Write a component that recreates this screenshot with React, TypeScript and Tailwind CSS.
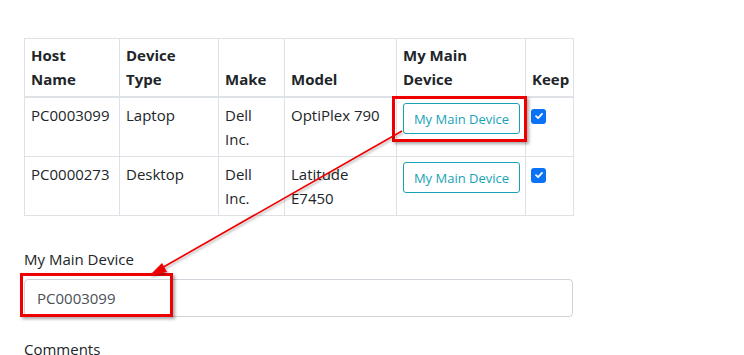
import React from "react";

const font = { fontFamily: '"Open Sans", "Noto Sans", sans-serif' };

function Check() {
  return (
    <span className="-ml-[1px] mt-[4px] inline-flex h-[15px] w-[15px] items-center justify-center rounded-[3px] bg-[#0a72f5]">
      <svg width="10" height="10" viewBox="0 0 10 10">
        <path d="M2 5.2 L4.1 7.2 L8 2.8" fill="none" stroke="white" strokeWidth="1.8" strokeLinecap="round" strokeLinejoin="round" />
      </svg>
    </span>
  );
}

function MainBtn() {
  return (
    <button className="h-[31px] w-[117px] rounded-[3px] border border-[#17a2b8] bg-white text-[13px] text-[#17a2b8]">
      My Main Device
    </button>
  );
}

export default function App() {
  const th = "border border-[#dee2e6] border-b-2 px-[6px] pt-[4px] pb-[5px] text-left align-bottom font-bold";
  const td = "border border-[#dee2e6] px-[6px] py-[5px] align-top";
  return (
    <div className="relative h-[355px] w-[744px] overflow-hidden bg-white text-[15px] leading-[24px] text-[#212529]" style={font}>
      <div className="w-[573px] pl-[24px] pt-[38px]">
        <table className="w-[549px] table-fixed border-collapse">
          <colgroup>
            <col className="w-[95px]" />
            <col className="w-[99px]" />
            <col className="w-[66px]" />
            <col className="w-[112px]" />
            <col className="w-[129px]" />
            <col className="w-[48px]" />
          </colgroup>
          <thead>
            <tr>
              <th className={th}>Host Name</th>
              <th className={th}>Device Type</th>
              <th className={th}>Make</th>
              <th className={th}>Model</th>
              <th className={th}>My Main Device</th>
              <th className={th}>Keep</th>
            </tr>
          </thead>
          <tbody>
            <tr>
              <td className={td}>PC0003099</td>
              <td className={td}>Laptop</td>
              <td className={td}>Dell Inc.</td>
              <td className={`${td} whitespace-nowrap`}>OptiPlex 790</td>
              <td className={td}><MainBtn /></td>
              <td className={td}><Check /></td>
            </tr>
            <tr>
              <td className={td}>PC0000273</td>
              <td className={td}>Desktop</td>
              <td className={td}>Dell Inc.</td>
              <td className={td}>Latitude E7450</td>
              <td className={td}><MainBtn /></td>
              <td className={td}><Check /></td>
            </tr>
          </tbody>
        </table>
        <div className="mt-[31px]">
          <label className="block">My Main Device</label>
          <div className="mt-[8px] flex h-[38px] w-[549px] items-center rounded-[4px] border border-[#ced4da] px-[12px] text-[#495057]">
            PC0003099
          </div>
        </div>
        <div className="mt-[20px]">
          <label className="block">Comments</label>
        </div>
      </div>

      {/* annotations */}
      <div className="absolute left-[392px] top-[96px] h-[46px] w-[135px] border-[3px] border-[#ee0000] shadow-[2px_2px_3px_rgba(0,0,0,0.35)]" />
      <div className="absolute left-[20px] top-[273px] h-[44px] w-[153px] border-[3px] border-[#ee0000] shadow-[2px_2px_3px_rgba(0,0,0,0.35)]" />
      <svg className="pointer-events-none absolute left-0 top-0" width="744" height="355">
        <defs>
          <filter id="sh" x="-10%" y="-10%" width="120%" height="120%">
            <feDropShadow dx="1.5" dy="1.5" stdDeviation="1" floodColor="#000" floodOpacity="0.3" />
          </filter>
        </defs>
        <g filter="url(#sh)">
          <line x1="402" y1="131" x2="160" y2="269" stroke="#ee0000" strokeWidth="1.6" />
          <polygon points="149,276 162,263 167,272" fill="#ee0000" />
        </g>
      </svg>
    </div>
  );
}
